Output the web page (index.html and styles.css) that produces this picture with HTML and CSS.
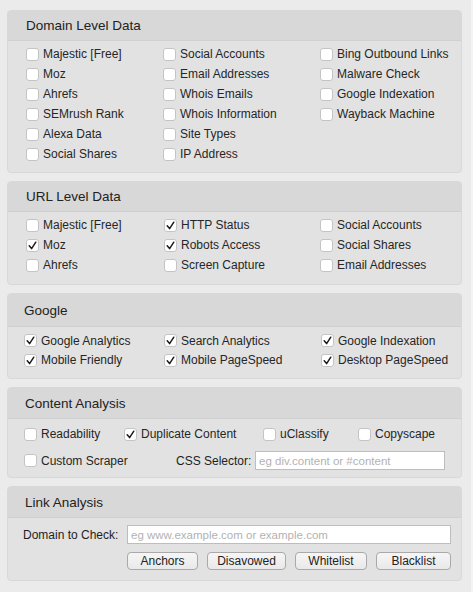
FILE: index.html
```html
<!DOCTYPE html>
<html>
<head>
<meta charset="utf-8">
<link rel="stylesheet" href="styles.css">
</head>
<body>
<div class="page">
  <section class="panel">
    <div class="head h30">Domain Level Data</div>
    <div class="body grid p1">
      <label class="cb"><span class="box"></span>Majestic [Free]</label>
      <label class="cb"><span class="box"></span>Social Accounts</label>
      <label class="cb"><span class="box"></span>Bing Outbound Links</label>
      <label class="cb"><span class="box"></span>Moz</label>
      <label class="cb"><span class="box"></span>Email Addresses</label>
      <label class="cb"><span class="box"></span>Malware Check</label>
      <label class="cb"><span class="box"></span>Ahrefs</label>
      <label class="cb"><span class="box"></span>Whois Emails</label>
      <label class="cb"><span class="box"></span>Google Indexation</label>
      <label class="cb"><span class="box"></span>SEMrush Rank</label>
      <label class="cb"><span class="box"></span>Whois Information</label>
      <label class="cb"><span class="box"></span>Wayback Machine</label>
      <label class="cb"><span class="box"></span>Alexa Data</label>
      <label class="cb"><span class="box"></span>Site Types</label>
      <span></span>
      <label class="cb"><span class="box"></span>Social Shares</label>
      <label class="cb"><span class="box"></span>IP Address</label>
    </div>
  </section>

  <section class="panel">
    <div class="head h30">URL Level Data</div>
    <div class="body grid p2">
      <label class="cb"><span class="box"></span>Majestic [Free]</label>
      <label class="cb"><span class="box on"><svg viewBox="0 0 13 13"><polyline points="3.2,6.8 5.6,9.6 9.8,3.2"/></svg></span>HTTP Status</label>
      <label class="cb"><span class="box"></span>Social Accounts</label>
      <label class="cb"><span class="box on"><svg viewBox="0 0 13 13"><polyline points="3.2,6.8 5.6,9.6 9.8,3.2"/></svg></span>Moz</label>
      <label class="cb"><span class="box on"><svg viewBox="0 0 13 13"><polyline points="3.2,6.8 5.6,9.6 9.8,3.2"/></svg></span>Robots Access</label>
      <label class="cb"><span class="box"></span>Social Shares</label>
      <label class="cb"><span class="box"></span>Ahrefs</label>
      <label class="cb"><span class="box"></span>Screen Capture</label>
      <label class="cb"><span class="box"></span>Email Addresses</label>
    </div>
  </section>

  <section class="panel">
    <div class="head h33">Google</div>
    <div class="body grid p3">
      <label class="cb tight"><span class="box on"><svg viewBox="0 0 13 13"><polyline points="3.2,6.8 5.6,9.6 9.8,3.2"/></svg></span>Google Analytics</label>
      <label class="cb tight"><span class="box on"><svg viewBox="0 0 13 13"><polyline points="3.2,6.8 5.6,9.6 9.8,3.2"/></svg></span>Search Analytics</label>
      <label class="cb tight"><span class="box on"><svg viewBox="0 0 13 13"><polyline points="3.2,6.8 5.6,9.6 9.8,3.2"/></svg></span>Google Indexation</label>
      <label class="cb tight"><span class="box on"><svg viewBox="0 0 13 13"><polyline points="3.2,6.8 5.6,9.6 9.8,3.2"/></svg></span>Mobile Friendly</label>
      <label class="cb tight"><span class="box on"><svg viewBox="0 0 13 13"><polyline points="3.2,6.8 5.6,9.6 9.8,3.2"/></svg></span>Mobile PageSpeed</label>
      <label class="cb tight"><span class="box on"><svg viewBox="0 0 13 13"><polyline points="3.2,6.8 5.6,9.6 9.8,3.2"/></svg></span>Desktop PageSpeed</label>
    </div>
  </section>

  <section class="panel">
    <div class="head h31">Content Analysis</div>
    <div class="body p4">
      <div class="row4">
        <label class="cb"><span class="box"></span>Readability</label>
        <label class="cb"><span class="box on"><svg viewBox="0 0 13 13"><polyline points="3.2,6.8 5.6,9.6 9.8,3.2"/></svg></span>Duplicate Content</label>
        <label class="cb"><span class="box"></span>uClassify</label>
        <label class="cb"><span class="box"></span>Copyscape</label>
      </div>
      <div class="row4b">
        <label class="cb"><span class="box"></span>Custom Scraper</label>
        <span class="flabel">CSS Selector:</span>
        <input class="field css" type="text" placeholder="eg div.content or #content">
      </div>
    </div>
  </section>

  <section class="panel">
    <div class="head h31">Link Analysis</div>
    <div class="body p5">
      <div class="row5">
        <span class="flabel dlabel">Domain to Check:</span>
        <input class="field grow" type="text" placeholder="eg www.example.com or example.com">
      </div>
      <div class="btns">
        <button class="btn">Anchors</button>
        <button class="btn">Disavowed</button>
        <button class="btn">Whitelist</button>
        <button class="btn">Blacklist</button>
      </div>
    </div>
  </section>
</div>
</body>
</html>
```

FILE: styles.css
```css
html, body {
  margin: 0;
  padding: 0;
  background: #ebebeb;
  height: 100%;
}
body {
  font-family: "Liberation Sans", Arial, sans-serif;
  font-size: 12px;
  color: #262626;
  border-right: 2px solid #f4f4f4;
  box-sizing: border-box;
}
.page {
  padding: 10px 0 0 7px;
  display: flex;
  flex-direction: column;
  gap: 8px;
  width: 455px;
}
.panel {
  background: #e2e2e2;
  border: 1px solid #d8d8d8;
  border-radius: 4px;
  overflow: hidden;
  box-sizing: border-box;
}
.head {
  background: #d8d8d8;
  border-bottom: 1px solid #d0d0d0;
  font-size: 13.5px;
  color: #222;
  display: flex;
  align-items: center;
  padding-left: 18px;
  box-sizing: border-box;
}
.h30 { height: 30px; }
.h31 { height: 31px; padding-left: 17px; }
.h33 { height: 33px; padding-left: 16px; }

.grid {
  display: grid;
  grid-template-columns: 137px 157px 1fr;
}
.p1 { padding: 3px 0 8px 18px; }
.p2 { padding: 3px 0 9px 18px; grid-template-columns: 138px 156px 1fr; }
.p3 { padding: 4px 0 8px 16px; grid-template-columns: 140px 157px 1fr; }

.cb {
  display: flex;
  align-items: center;
  height: 20px;
  gap: 4px;
  white-space: nowrap;
}
.cb.tight { height: 19.5px; }
.box {
  width: 13px;
  height: 13px;
  box-sizing: border-box;
  background: #fff;
  border: 1px solid #c4c4c4;
  border-radius: 3px;
  flex: none;
  display: flex;
}
.box svg {
  width: 13px;
  height: 13px;
  margin: -1px;
}
.box polyline {
  fill: none;
  stroke: #1c1c1c;
  stroke-width: 1.5;
  stroke-linecap: round;
  stroke-linejoin: round;
}

.p4 { padding: 5px 16px 7px 16px; }
.row4 {
  display: grid;
  grid-template-columns: 100px 139px 95px 1fr;
}
.row4b {
  display: flex;
  align-items: center;
  margin-top: 7px;
  height: 19px;
}
.row4b .cb { width: 152px; }
.flabel {
  color: #1e1e1e;
  white-space: nowrap;
}
.row4b .flabel { width: 79px; }
.field {
  box-sizing: border-box;
  height: 19px;
  border: 1px solid #bdbdbd;
  background: #fff;
  font-family: "Liberation Sans", Arial, sans-serif;
  font-size: 11.5px;
  padding: 0 3px;
  margin: 0;
  outline: none;
}
.field::placeholder { color: #b2b2b2; }
.css { width: 190px; }

.p5 { padding: 7px 10px 10px 15px; }
.row5 {
  display: flex;
  align-items: center;
}
.dlabel { width: 104px; }
.grow { flex: 1; }
.btns {
  margin: 8px 0 0 104px;
  display: grid;
  grid-template-columns: 71px 79px 72px 75px;
  column-gap: 9px;
}
.btn {
  height: 18px;
  box-sizing: border-box;
  border: 1px solid #a9a9a9;
  border-radius: 4px;
  background: linear-gradient(#f6f6f6, #e9e9e9);
  font-family: "Liberation Sans", Arial, sans-serif;
  font-size: 12px;
  color: #222;
  padding: 0;
  margin: 0;
}
```
